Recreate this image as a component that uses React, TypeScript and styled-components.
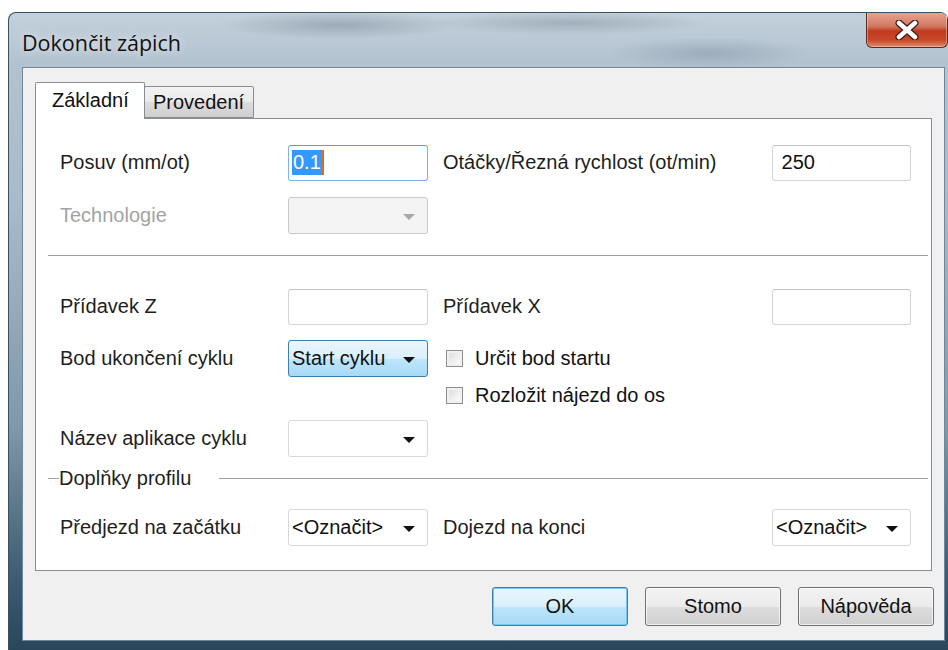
import React from 'react'
import styled, { createGlobalStyle } from 'styled-components'

const GlobalStyle = createGlobalStyle`
  html, body {
    margin: 0;
    padding: 0;
    background: #ffffff;
  }
  body {
    font-family: "Liberation Sans", Arial, sans-serif;
  }
`

const Window = styled.div`
  margin: 12px 0 0 8px;
  width: 940px;
  height: 638px;
  border-radius: 8px 8px 0 0;
  border: 1px solid #3b4f5e;
  border-right: none;
  border-bottom: none;
  box-sizing: border-box;
  background:
    radial-gradient(ellipse 120px 14px at 330px 12px, rgba(90, 105, 120, 0.35), transparent),
    radial-gradient(ellipse 140px 12px at 560px 10px, rgba(90, 105, 120, 0.3), transparent),
    radial-gradient(ellipse 100px 16px at 700px 40px, rgba(80, 100, 120, 0.25), transparent),
    linear-gradient(180deg, #c4d1dc 0%, #b2c2cf 8%, #a9bac8 30%, #7f98ab 65%, #3f5d73 88%, #29465b 100%);
  display: flex;
  flex-direction: column;
  overflow: hidden;
`

const TitleBar = styled.div`
  height: 54px;
  display: flex;
  align-items: flex-start;
  justify-content: space-between;
`

const Title = styled.div`
  font-family: "Open Sans", "Noto Sans", sans-serif;
  font-size: 21.5px;
  color: #111;
  padding: 17px 0 0 13px;
  line-height: 26px;
  text-shadow: 0 0 8px rgba(255, 255, 255, 0.9);
`

const CloseButton = styled.div`
  width: 82px;
  height: 36px;
  margin-top: -1px;
  border: 1px solid #5a2a22;
  border-top: none;
  border-radius: 0 0 6px 6px;
  box-sizing: border-box;
  background: linear-gradient(180deg, #e8a592 0%, #d27a63 40%, #c23a1c 55%, #c9482a 80%, #de8a6e 100%);
  box-shadow: inset 0 0 0 1px rgba(255, 255, 255, 0.35);
  display: flex;
  align-items: center;
  justify-content: center;
`

const Frame = styled.div`
  flex: 1;
  display: flex;
  padding: 0 4px 9px 13px;
`

const Client = styled.div`
  flex: 1;
  background: #f0f0f0;
  border: 1px solid #6f8799;
  display: flex;
  flex-direction: column;
  padding: 14px 12px 0 12px;
`

const TabStrip = styled.div`
  display: flex;
  align-items: flex-end;
  height: 36px;
  position: relative;
  z-index: 1;
`

const Tab = styled.div<{ $active?: boolean }>`
  font-size: 20px;
  line-height: 22px;
  color: #111;
  box-sizing: border-box;
  border: 1px solid #898c95;
  border-bottom: ${p => (p.$active ? 'none' : '1px solid #898c95')};
  border-radius: 2px 2px 0 0;
  height: ${p => (p.$active ? '37px' : '32px')};
  margin-bottom: ${p => (p.$active ? '-1px' : '0')};
  margin-left: ${p => (p.$active ? '0' : '-1px')};
  padding: ${p => (p.$active ? '6px 0 0 16px' : '4px 0 0 8px')};
  width: 110px;
  background: ${p => (p.$active ? '#ffffff' : 'linear-gradient(180deg, #f2f2f2 0%, #ebebeb 50%, #dddddd 51%, #cfcfcf 100%)')};
`

const Panel = styled.div`
  background: #ffffff;
  border: 1px solid #898c95;
  width: 897px;
  height: 453px;
  box-sizing: border-box;
  padding-top: 25px;
`

const Row = styled.div<{ $top?: number; $height?: number }>`
  display: grid;
  grid-template-columns: 228px 140px 344px 139px;
  align-items: center;
  height: ${p => p.$height ?? 37}px;
  margin-top: ${p => p.$top ?? 0}px;
  padding-left: 24px;
`

const Label = styled.div<{ $disabled?: boolean; $indent?: boolean }>`
  font-size: 20px;
  color: ${p => (p.$disabled ? '#a3a3a3' : '#1e1e1e')};
  padding-left: ${p => (p.$indent ? '15px' : '0')};
  white-space: nowrap;
`

const TextBox = styled.div<{ $focused?: boolean }>`
  height: 36px;
  box-sizing: border-box;
  border: 1px solid ${p => (p.$focused ? '#7eb4ea' : '#d5d5d5')};
  border-top-color: ${p => (p.$focused ? '#569de5' : '#c3c3c3')};
  border-radius: 3px;
  background: #fff;
  font-size: 20px;
  color: #111;
  display: flex;
  align-items: center;
  padding-left: 3px;
`

const Selected = styled.span`
  background: #3399ff;
  color: #fff;
  padding: 1px 1px;
  border-right: 2px solid #e46a18;
`

const Combo = styled.div<{ $variant?: 'hot' | 'disabled' }>`
  height: 37px;
  box-sizing: border-box;
  border-radius: 3px;
  border: 1px solid
    ${p => (p.$variant === 'hot' ? '#3c7fb1' : p.$variant === 'disabled' ? '#c9c9c9' : '#d8d8d8')};
  background: ${p =>
    p.$variant === 'hot'
      ? 'linear-gradient(180deg, #eaf6fd 0%, #d9f0fc 50%, #bee6fd 51%, #a7d9f5 100%)'
      : p.$variant === 'disabled'
      ? '#f4f4f4'
      : '#ffffff'};
  display: flex;
  align-items: center;
  justify-content: space-between;
  padding: 0 12px 0 3px;
  font-size: 20px;
  color: #111;
`

const Arrow = styled.span<{ $disabled?: boolean }>`
  width: 0;
  height: 0;
  border-left: 6px solid transparent;
  border-right: 6px solid transparent;
  border-top: 6px solid ${p => (p.$disabled ? '#a8a8a8' : '#111')};
  margin-top: 3px;
`

const CheckItem = styled.label`
  display: flex;
  align-items: center;
  gap: 12px;
  padding-left: 18px;
  font-size: 20px;
  color: #111;
  grid-column: 3 / span 2;
`

const CheckBox = styled.span`
  width: 17px;
  height: 17px;
  flex: none;
  box-sizing: border-box;
  border: 1px solid #8e8f8f;
  background: linear-gradient(135deg, #d9d9d9 0%, #f2f2f2 60%, #ffffff 100%);
  box-shadow: inset 0 0 0 2px #f0f0f0;
`

const Separator = styled.div<{ $top: number }>`
  height: 1px;
  background: #a0a0a0;
  margin: ${p => p.$top}px 3px 0 12px;
`

const GroupHeader = styled.div`
  display: flex;
  align-items: center;
  height: 22px;
  margin: 10px 3px 0 12px;
  font-size: 20px;
  color: #1e1e1e;
  &::before {
    content: '';
    width: 11px;
    height: 1px;
    background: #a0a0a0;
  }
  &::after {
    content: '';
    flex: 1;
    height: 1px;
    background: #a0a0a0;
    margin-left: 28px;
  }
`

const ButtonBar = styled.div`
  display: flex;
  justify-content: flex-end;
  gap: 17px;
  padding-top: 16px;
  margin-right: -2px;
`

const Button = styled.div<{ $default?: boolean }>`
  width: 136px;
  height: 39px;
  box-sizing: border-box;
  border-radius: 3px;
  border: 1px solid ${p => (p.$default ? '#3c7fb1' : '#707070')};
  background: ${p =>
    p.$default
      ? 'linear-gradient(180deg, #eaf6fd 0%, #d9f0fc 50%, #bee6fd 51%, #a7d9f5 100%)'
      : 'linear-gradient(180deg, #f2f2f2 0%, #ebebeb 50%, #dddddd 51%, #cfcfcf 100%)'};
  box-shadow: inset 0 0 0 1px ${p => (p.$default ? '#74c5f0' : 'rgba(255,255,255,0.7)')};
  display: flex;
  align-items: center;
  justify-content: center;
  font-size: 20px;
  color: #111;
`

export default function App() {
  return (
    <>
      <GlobalStyle />
      <Window>
        <TitleBar>
          <Title>Dokončit zápich</Title>
          <CloseButton>
            <svg width="26" height="20" viewBox="0 0 26 20">
              <path d="M5 3 L21 17 M21 3 L5 17" stroke="#3b1c18" strokeWidth="7" strokeLinecap="round" />
              <path d="M5 3 L21 17 M21 3 L5 17" stroke="#ffffff" strokeWidth="4.5" strokeLinecap="round" />
            </svg>
          </CloseButton>
        </TitleBar>
        <Frame>
          <Client>
            <TabStrip>
              <Tab $active>Základní</Tab>
              <Tab>Provedení</Tab>
            </TabStrip>
            <Panel>
              <Row>
                <Label>Posuv (mm/ot)</Label>
                <TextBox $focused>
                  <Selected>0.1</Selected>
                </TextBox>
                <Label $indent>Otáčky/Řezná rychlost (ot/min)</Label>
                <TextBox>&nbsp;250</TextBox>
              </Row>
              <Row $top={16}>
                <Label $disabled>Technologie</Label>
                <Combo $variant="disabled">
                  <span />
                  <Arrow $disabled />
                </Combo>
              </Row>
              <Separator $top={21} />
              <Row $top={32}>
                <Label>Přídavek Z</Label>
                <TextBox />
                <Label $indent>Přídavek X</Label>
                <TextBox />
              </Row>
              <Row $top={15}>
                <Label>Bod ukončení cyklu</Label>
                <Combo $variant="hot">
                  <span>Start cyklu</span>
                  <Arrow />
                </Combo>
                <CheckItem>
                  <CheckBox />
                  Určit bod startu
                </CheckItem>
              </Row>
              <Row $top={3} $height={30}>
                <span />
                <span />
                <CheckItem>
                  <CheckBox />
                  Rozložit nájezd do os
                </CheckItem>
              </Row>
              <Row $top={10}>
                <Label>Název aplikace cyklu</Label>
                <Combo>
                  <span />
                  <Arrow />
                </Combo>
              </Row>
              <GroupHeader>Doplňky profilu</GroupHeader>
              <Row $top={20}>
                <Label>Předjezd na začátku</Label>
                <Combo>
                  <span>&lt;Označit&gt;</span>
                  <Arrow />
                </Combo>
                <Label $indent>Dojezd na konci</Label>
                <Combo>
                  <span>&lt;Označit&gt;</span>
                  <Arrow />
                </Combo>
              </Row>
            </Panel>
            <ButtonBar>
              <Button $default>OK</Button>
              <Button>Stomo</Button>
              <Button>Nápověda</Button>
            </ButtonBar>
          </Client>
        </Frame>
      </Window>
    </>
  )
}
